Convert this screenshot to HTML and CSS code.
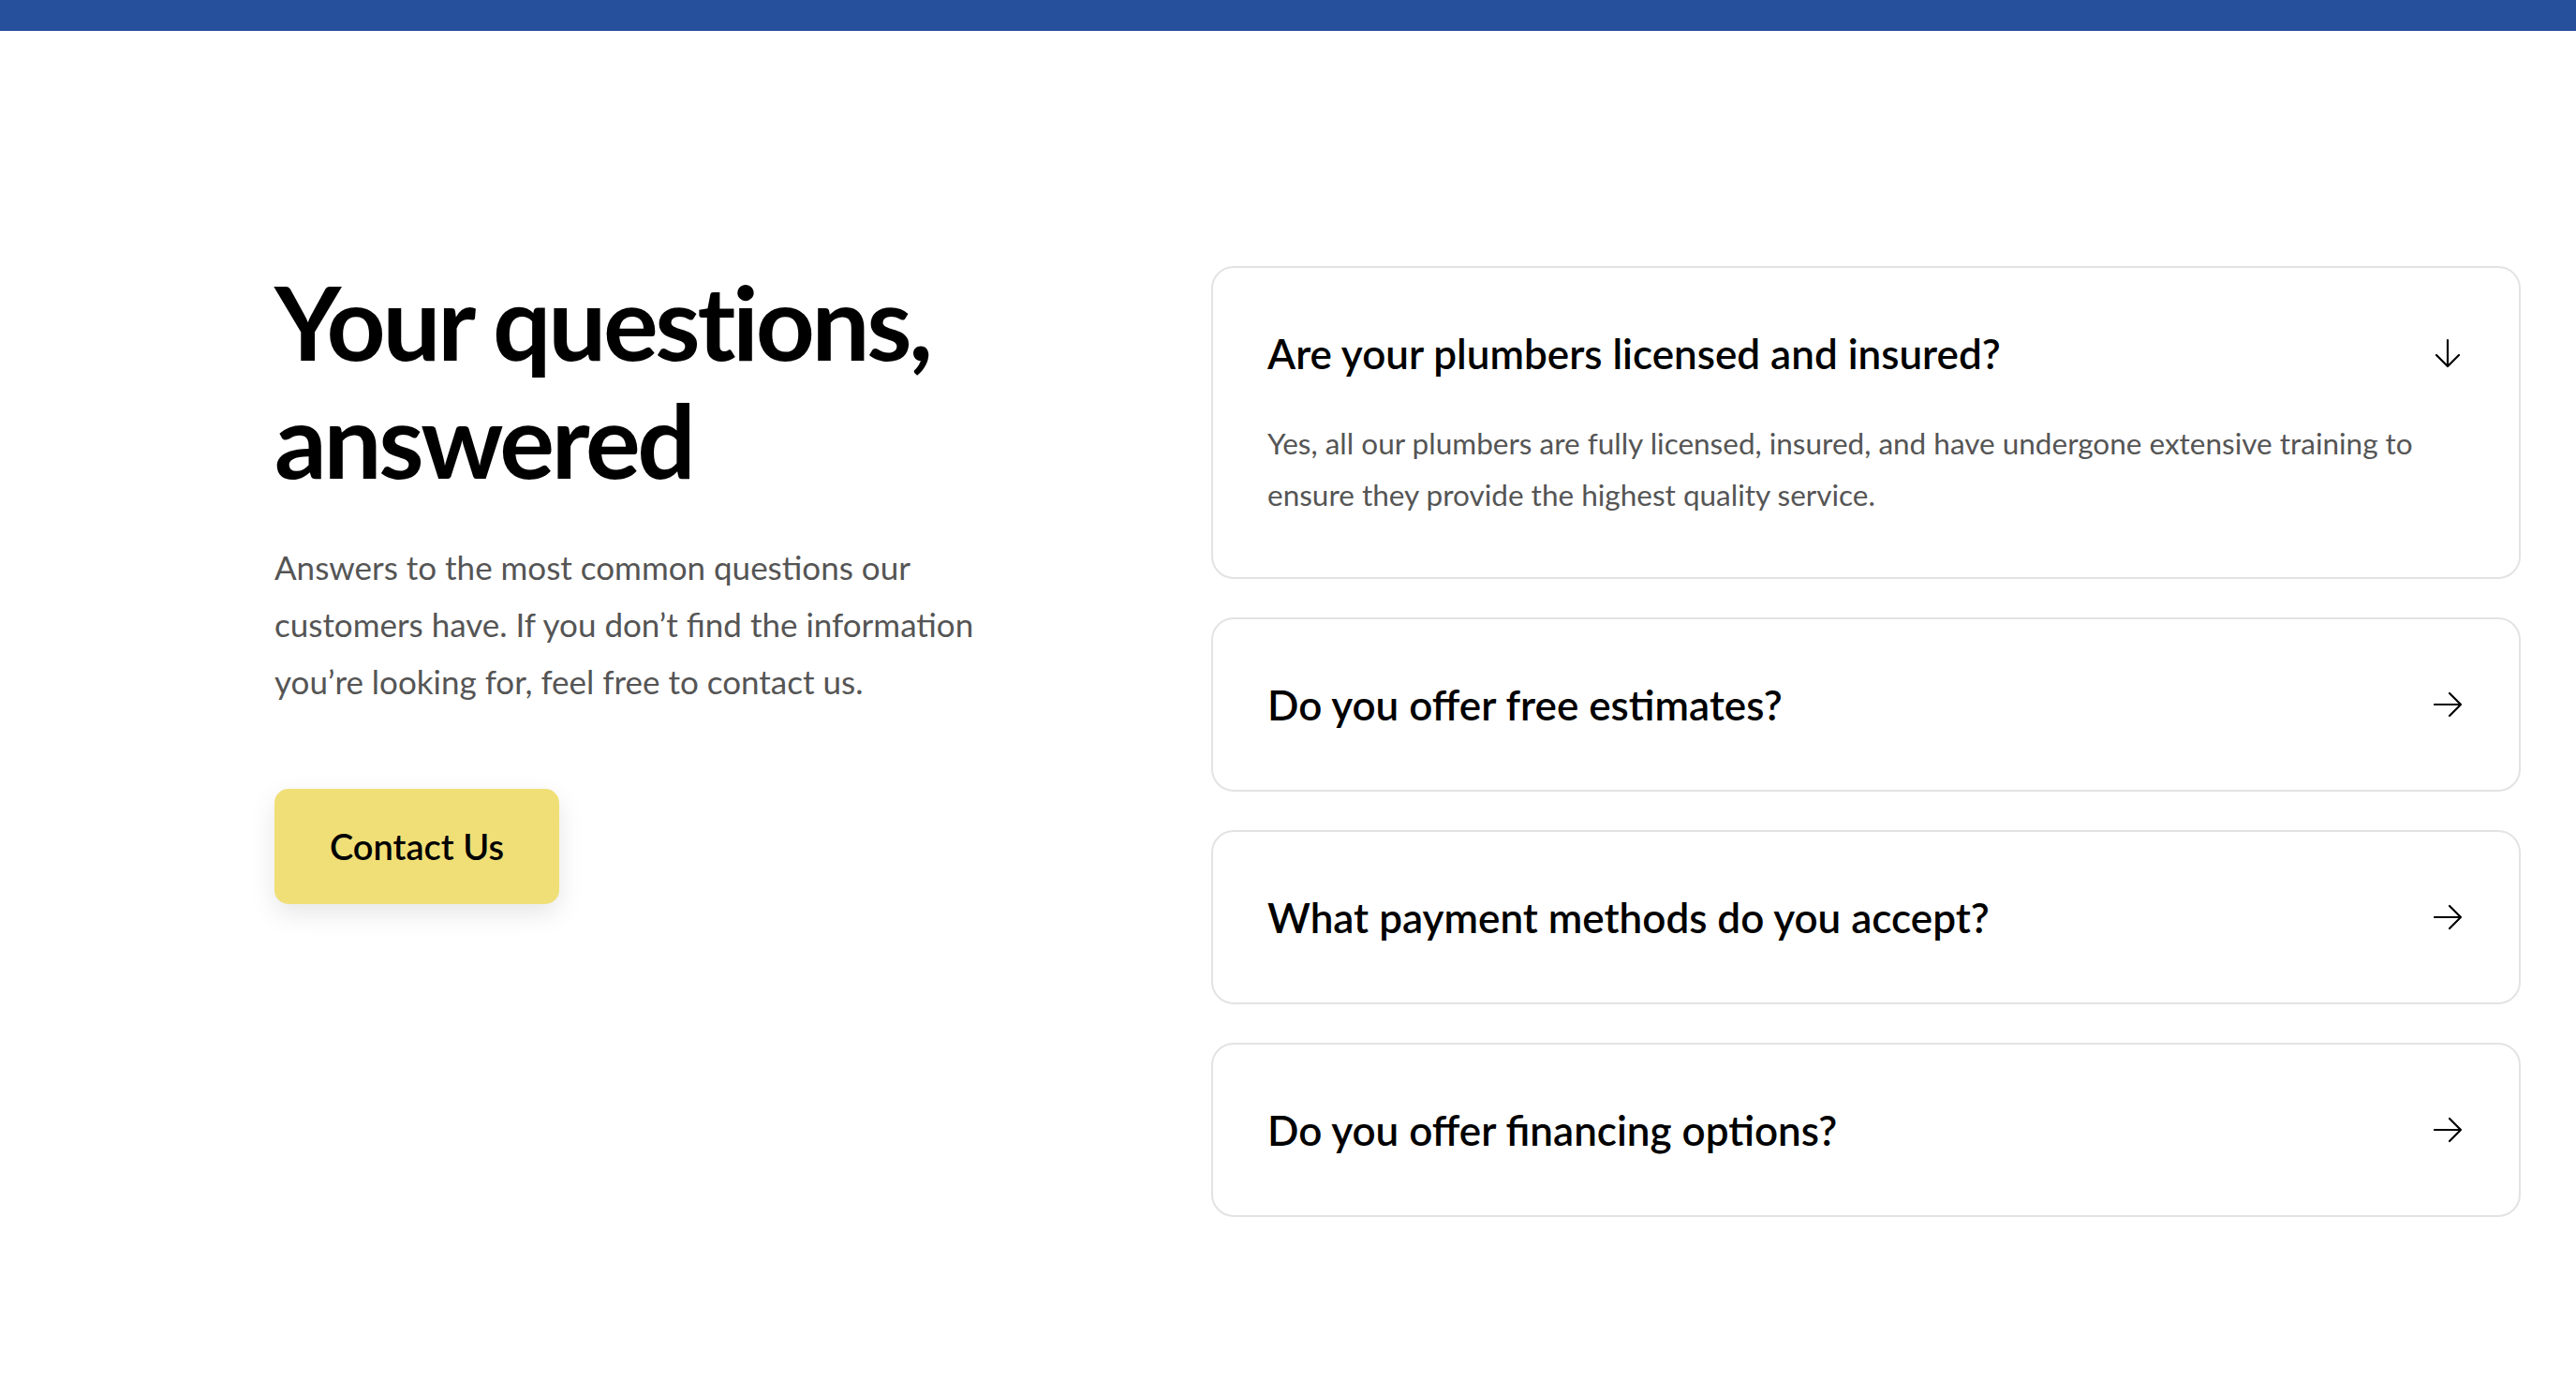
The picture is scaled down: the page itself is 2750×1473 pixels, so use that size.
FILE: index.html
```html
<!DOCTYPE html>
<html lang="en">
<head>
<meta charset="utf-8">
<title>FAQ</title>
<link rel="stylesheet" href="styles.css">
</head>
<body>
<div class="topbar"></div>
<section class="faq">
  <div class="intro">
    <h1 class="title">Your questions, answered</h1>
    <p class="lead">Answers to the most common questions our customers have. If you don’t find the information you’re looking for, feel free to contact us.</p>
    <a class="btn" href="#">Contact Us</a>
  </div>
  <div class="list">
    <div class="item open">
      <div class="q">
        <span class="q-text">Are your plumbers licensed and insured?</span>
        <svg class="icon" viewBox="0 0 32 32" width="32" height="32"><path d="M16 2V30M4 18L16 30L28 18" fill="none" stroke="#000" stroke-width="2.2" stroke-linecap="round" stroke-linejoin="round"/></svg>
      </div>
      <p class="a">Yes, all our plumbers are fully licensed, insured, and have undergone extensive training to ensure they provide the highest quality service.</p>
    </div>
    <div class="item">
      <div class="q">
        <span class="q-text">Do you offer free estimates?</span>
        <svg class="icon" viewBox="0 0 32 32" width="32" height="32"><path d="M2 16H30M18 4L30 16L18 28" fill="none" stroke="#000" stroke-width="2.2" stroke-linecap="round" stroke-linejoin="round"/></svg>
      </div>
    </div>
    <div class="item">
      <div class="q">
        <span class="q-text">What payment methods do you accept?</span>
        <svg class="icon" viewBox="0 0 32 32" width="32" height="32"><path d="M2 16H30M18 4L30 16L18 28" fill="none" stroke="#000" stroke-width="2.2" stroke-linecap="round" stroke-linejoin="round"/></svg>
      </div>
    </div>
    <div class="item">
      <div class="q">
        <span class="q-text">Do you offer financing options?</span>
        <svg class="icon" viewBox="0 0 32 32" width="32" height="32"><path d="M2 16H30M18 4L30 16L18 28" fill="none" stroke="#000" stroke-width="2.2" stroke-linecap="round" stroke-linejoin="round"/></svg>
      </div>
    </div>
  </div>
</section>
</body>
</html>
```
FILE: styles.css
```css
* { box-sizing: border-box; }
html, body { margin: 0; padding: 0; background: #fff; }
body {
  font-family: "Lato", "Inter", "Liberation Sans", sans-serif;
  color: #000;
  -webkit-font-smoothing: antialiased;
}
.topbar {
  height: 33px;
  background: #264f9c;
}
.faq {
  display: grid;
  grid-template-columns: 780px 1fr;
  column-gap: 220px;
  padding: 251px 59px 120px 293px;
  align-items: start;
}
.intro { display: flex; flex-direction: column; align-items: flex-start; }
.title {
  margin: -5px 0 0;
  font-size: 110px;
  line-height: 126px;
  font-weight: 700;
  letter-spacing: -0.03em;
  color: #000;
}
.lead {
  margin: 44px 0 0;
  font-size: 35px;
  line-height: 61px;
  color: #555;
  font-weight: 400;
}
.btn {
  margin-top: 84px;
  display: inline-block;
  padding: 40px 59px;
  background: #f0df76;
  border-radius: 15px;
  font-size: 38px;
  line-height: 43px;
  font-weight: 600;
  color: #000;
  text-decoration: none;
  box-shadow: 0 10px 28px rgba(0, 0, 0, 0.10);
}
.list { display: flex; flex-direction: column; gap: 41px; }
.item {
  border: 2px solid #e3e3e3;
  border-radius: 24px;
  padding: 60px 60px 60px 58px;
  background: #fff;
}
.q {
  display: flex;
  justify-content: space-between;
  align-items: center;
  gap: 40px;
}
.q-text {
  font-size: 44px;
  line-height: 62px;
  font-weight: 600;
  color: #000;
}
.icon { flex: none; display: block; }
.a {
  margin: 38px 0 0;
  font-size: 31.5px;
  line-height: 55px;
  color: #555;
}
```
